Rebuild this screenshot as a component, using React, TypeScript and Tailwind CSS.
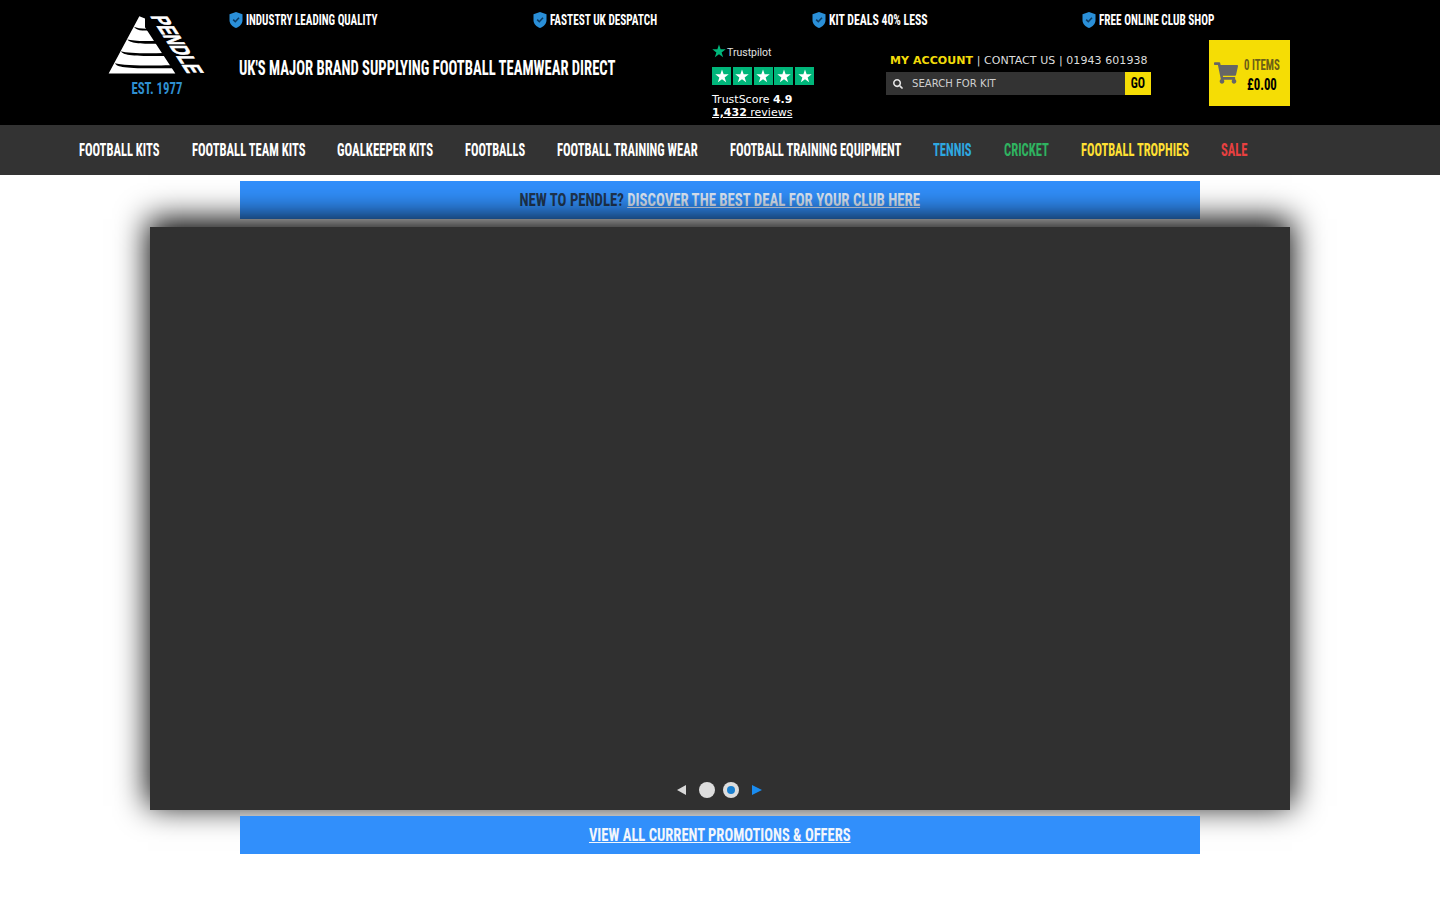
import { FaSearch, FaShoppingCart } from "react-icons/fa";

const cond = "inline-block whitespace-nowrap font-['Roboto',sans-serif] font-bold font-stretch-condensed";

function Shield() {
  return (
    <svg viewBox="0 0 14 16" className="w-[14px] h-[16px] shrink-0">
      <path d="M7 0 L13.5 2.2 V8 C13.5 12 10.5 14.8 7 16 C3.5 14.8 .5 12 .5 8 V2.2 Z" fill="#2a8fd8" />
      <path d="M4.2 7.6 L6.3 9.7 L10 5.8" fill="none" stroke="#0b3a63" strokeWidth="1.6" />
    </svg>
  );
}

function Logo() {
  const bands = [
    "M102,65 C108,76 125,79 185,78 L185,69 C140,71 115,72 102,65Z",
    "M82,102 C90,114 115,117 210,115 L210,105 C150,108 100,109 82,102Z",
    "M63,138 C70,151 100,154 235,152 L235,142 C170,145 85,146 63,138Z",
    "M45,174 C52,188 85,191 255,189 L255,179 C190,182 70,183 45,174Z",
  ];
  return (
    <svg viewBox="0 0 345 230" className="w-[115px] h-[77px] block">
      <polygon points="118,33 26,205 226,205 135,66 135,40" fill="#fff" />
      {bands.map((d) => (
        <path key={d} d={d} fill="#000" />
      ))}
      <text
        transform="matrix(.545,.84,-1.3,0,150,32)"
        fontFamily="Liberation Sans, sans-serif"
        fontWeight="700"
        fontSize="56"
        textLength="206"
        lengthAdjust="spacingAndGlyphs"
        fill="#fff"
        stroke="#fff"
        strokeWidth="2"
      >
        PENDLE
      </text>
    </svg>
  );
}

function Star({ cls, fill }: { cls: string; fill: string }) {
  return (
    <svg viewBox="0 0 24 24" className={cls}>
      <polygon points="12,1 14.8,9.2 23.5,9.2 16.5,14.4 19.1,22.8 12,17.6 4.9,22.8 7.5,14.4 .5,9.2 9.2,9.2" fill={fill} />
    </svg>
  );
}

function Usp({ w, s, text }: { w: string; s: string; text: string }) {
  return (
    <div className={`flex items-center ${w}`}>
      <Shield />
      <div className="ml-[3px] w-[10px]">
        <span className={`${cond} text-[15px] text-white origin-left ${s}`}>{text}</span>
      </div>
    </div>
  );
}

const nav = [
  { t: "FOOTBALL KITS", c: "w-[81px] text-white", s: "scale-x-[.697]" },
  { t: "FOOTBALL TEAM KITS", c: "w-[113px] text-white", s: "scale-x-[.70]" },
  { t: "GOALKEEPER KITS", c: "w-[96px] text-white", s: "scale-x-[.71]" },
  { t: "FOOTBALLS", c: "w-[60px] text-white", s: "scale-x-[.69]" },
  { t: "FOOTBALL TRAINING WEAR", c: "w-[141px] text-white", s: "scale-x-[.70]" },
  { t: "FOOTBALL TRAINING EQUIPMENT", c: "w-[171px] text-white", s: "scale-x-[.696]" },
  { t: "TENNIS", c: "w-[39px] text-[#2ea8e0]", s: "scale-x-[.70]" },
  { t: "CRICKET", c: "w-[45px] text-[#2fb360]", s: "scale-x-[.70]" },
  { t: "FOOTBALL TROPHIES", c: "w-[108px] text-[#ffe033]", s: "scale-x-[.69]" },
  { t: "SALE", c: "w-[27px] text-[#e84040]", s: "scale-x-[.70]" },
];

export default function App() {
  return (
    <div className="min-h-[900px] bg-white font-['DejaVu_Sans',sans-serif]">
      <header className="h-[125px] bg-black flex pl-[100px]">
        <div className="w-[115px] pt-[5px] flex flex-col items-center">
          <Logo />
          <div className="h-[14px] flex justify-center mt-[-1px] ml-[-2px]">
            <span className={`${cond} text-[17px] leading-[14px] text-[#2f8fd0] scale-x-[.75]`}>EST. 1977</span>
          </div>
        </div>
        <div className="ml-[14px] flex-1">
          <div className="h-[40px] flex items-center">
            <Usp w="w-[304px]" s="scale-x-[.742]" text="INDUSTRY LEADING QUALITY" />
            <Usp w="w-[279px]" s="scale-x-[.75]" text="FASTEST UK DESPATCH" />
            <Usp w="w-[270px]" s="scale-x-[.785]" text="KIT DEALS 40% LESS" />
            <Usp w="w-[200px]" s="scale-x-[.75]" text="FREE ONLINE CLUB SHOP" />
          </div>
          <div className="flex">
            <div className="w-[483px] pl-[10px] pt-[18px]">
              <span className={`${cond} text-[19.5px] leading-[20px] text-white origin-left scale-x-[.75]`}>
                UK'S MAJOR BRAND SUPPLYING FOOTBALL TEAMWEAR DIRECT
              </span>
            </div>
            <div className="w-[174px] pt-[4px] text-white">
              <div className="flex items-center h-[14px]">
                <Star cls="w-[14px] h-[14px]" fill="#00b67a" />
                <span className="ml-[1px] mt-[3px] text-[10.5px] font-['Roboto',sans-serif] text-[#e0e0e0]">Trustpilot</span>
              </div>
              <div className="flex gap-[1.75px] mt-[9px]">
                {[0, 1, 2, 3, 4].map((i) => (
                  <div key={i} className="w-[19px] h-[18px] bg-[#00b67a] flex items-center justify-center">
                    <Star cls="w-[14px] h-[14px]" fill="#fff" />
                  </div>
                ))}
              </div>
              <div className="mt-[8px] text-[11px] leading-[13px]">
                TrustScore <b>4.9</b>
              </div>
              <div className="text-[11px] leading-[13px] underline">
                <b>1,432</b> reviews
              </div>
            </div>
            <div className="w-[323px] pt-[14px]">
              <div className="pl-[4px] text-[11px] leading-[14px] tracking-[.07px] text-[#dddddd] whitespace-nowrap">
                <b className="text-[#f3dc0a]">MY ACCOUNT</b> | CONTACT US | 01943 601938
              </div>
              <div className="flex mt-[4px] h-[23px] w-[265px]">
                <div className="flex-1 bg-[#333333] flex items-center pl-[7px]">
                  <FaSearch className="text-[#e5e5e5] w-[10px] h-[10px]" />
                  <span className="ml-[9px] text-[10.1px] text-[#cfcfcf]">SEARCH FOR KIT</span>
                </div>
                <div className="w-[26px] bg-[#f5dd05] flex items-center justify-center">
                  <span className={`${cond} text-[15px] text-black scale-x-[.8]`}>GO</span>
                </div>
              </div>
            </div>
            <div className="w-[81px] h-[66px] bg-[#f5dd05] flex items-center pl-[5px]">
              <FaShoppingCart className="text-[#666666] w-[24px] h-[22px] shrink-0" />
              <div className="ml-[6px] w-[40px] flex flex-col items-start pt-[3px]">
                <span className={`${cond} text-[15px] leading-[20px] text-[#6b6016] origin-left scale-x-[.72]`}>0 ITEMS</span>
                <span className={`${cond} ml-[3px] text-[16px] leading-[20px] text-black origin-left scale-x-[.8]`}>£0.00</span>
              </div>
            </div>
          </div>
        </div>
      </header>

      <nav className="h-[50px] bg-[#333333] flex items-center gap-[32px] pl-[79px] pb-[2px]">
        {nav.map((n) => (
          <div key={n.t} className={n.c}>
            <span className={`${cond} text-[18px] origin-left ${n.s}`}>{n.t}</span>
          </div>
        ))}
      </nav>

      <div className="mt-[6px] mx-[240px] h-[38px] bg-[#318ffb] flex items-center justify-center pt-[1px]">
        <span className={`${cond} text-[19px] text-[#1f3550] scale-x-[.777]`}>
          NEW TO PENDLE? <span className="text-[#dbe6f5] underline">DISCOVER THE BEST DEAL FOR YOUR CLUB HERE</span>
        </span>
      </div>

      <div className="relative mt-[8px] mx-[150px] h-[583px] bg-[#303030] shadow-[0_-6px_30px_2px_#000] flex items-end justify-center pb-[11px]">
        <div className="flex items-center h-[18px] ml-[-2px]">
          <div className="w-0 h-0 border-y-[5px] border-y-transparent border-r-[9px] border-r-[#d8d8d8]" />
          <div className="ml-[13px] w-[16px] h-[16px] rounded-full bg-[#dddddd]" />
          <div className="ml-[8px] w-[16px] h-[16px] rounded-full bg-[#dddddd] flex items-center justify-center">
            <div className="w-[8px] h-[8px] rounded-full bg-[#1a80d0]" />
          </div>
          <div className="ml-[13px] w-0 h-0 border-y-[5px] border-y-transparent border-l-[10px] border-l-[#1a8cf0]" />
        </div>
      </div>

      <div className="relative z-10 mt-[6px] mx-[240px] h-[38px] bg-[#318ffb] flex items-center justify-center pt-[1px]">
        <span className={`${cond} text-[19px] text-[#f2f6fc] underline scale-x-[.766]`}>VIEW ALL CURRENT PROMOTIONS &amp; OFFERS</span>
      </div>
    </div>
  );
}
